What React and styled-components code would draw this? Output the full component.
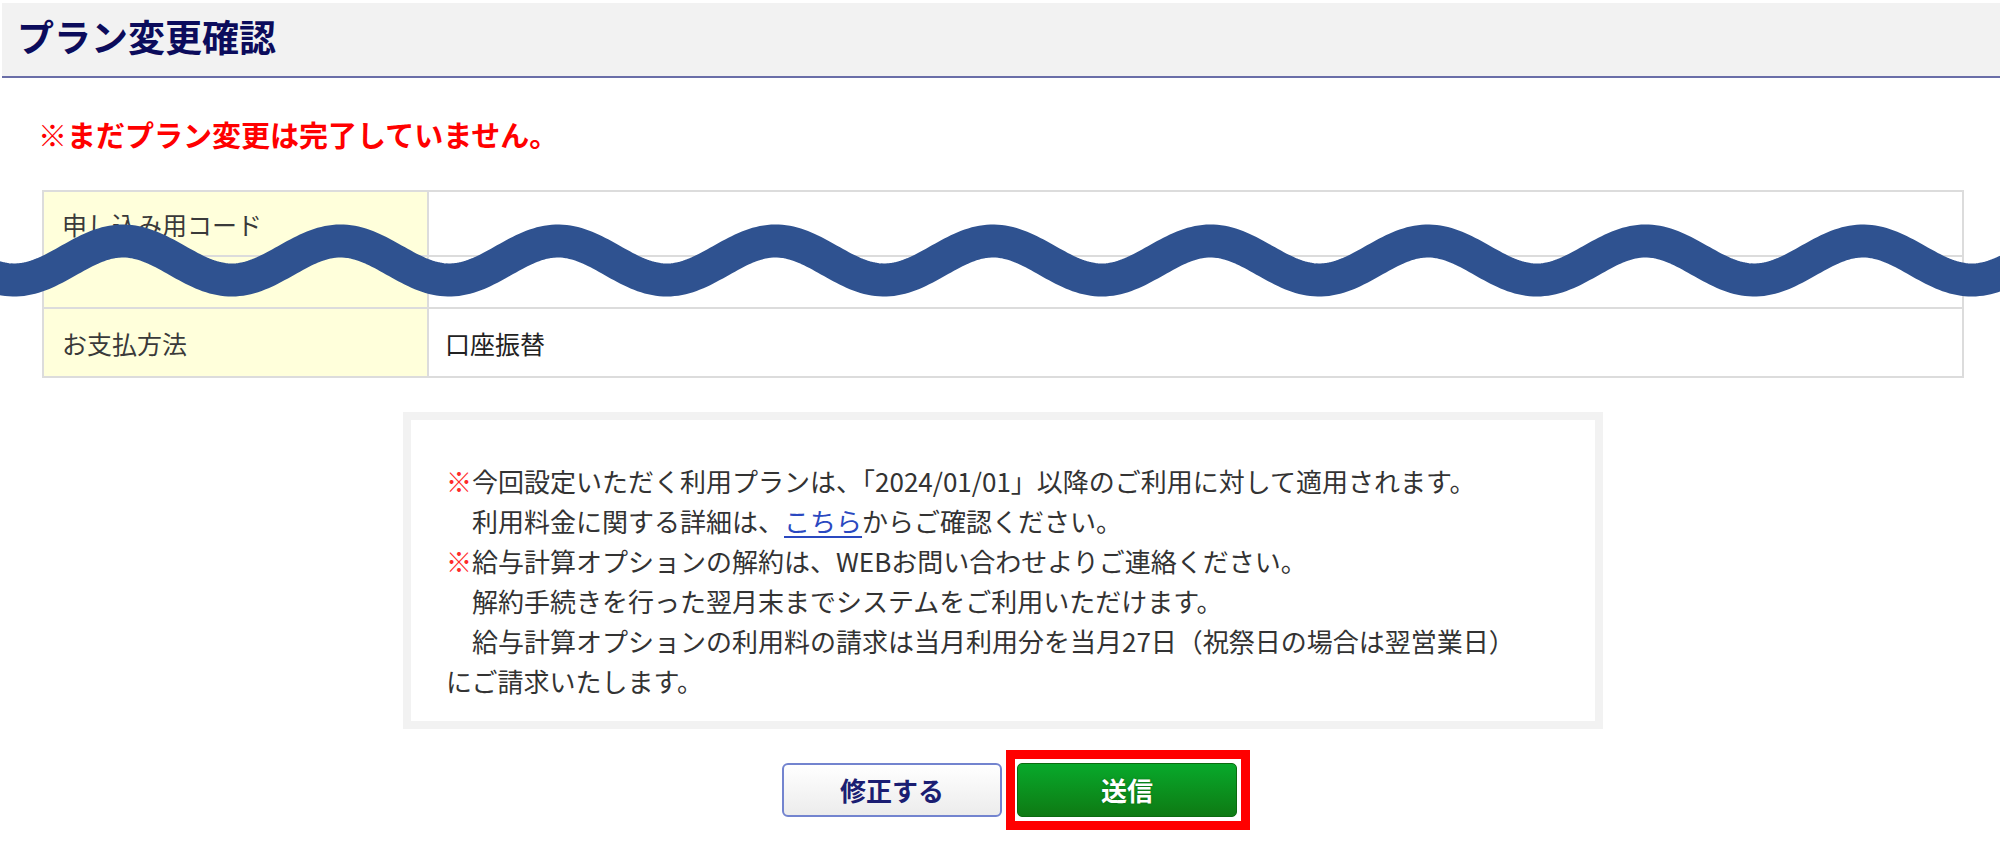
import React from "react";
import styled, { createGlobalStyle } from "styled-components";

const GlobalStyle = createGlobalStyle`
  html, body {
    margin: 0;
    padding: 0;
    background: #ffffff;
  }
  body {
    font-family: "Noto Sans CJK JP", "Noto Sans", sans-serif;
    color: #333333;
  }
`;

const Page = styled.div`
  position: relative;
  width: 2000px;
  min-height: 845px;
  overflow: hidden;
`;

const Header = styled.header`
  margin: 3px 0 0 2px;
  height: 73px;
  box-sizing: content-box;
  background: #f2f2f2;
  border-bottom: 2px solid #6a6ea8;
  display: flex;
  align-items: center;
  padding: 0 0 0 15px;
`;

const Title = styled.h1`
  margin: 0 0 6px 0;
  font-size: 37px;
  line-height: 1;
  font-weight: 700;
  color: #0c0c5c;
`;

const Warning = styled.p`
  margin: 42px 0 0 38px;
  font-size: 29px;
  line-height: 1;
  font-weight: 700;
  color: #ff0000;
`;

const InfoTable = styled.div`
  margin: 41px 36px 0 42px;
  display: grid;
  grid-template-columns: 385px 1fr;
  border-top: 2px solid #dcdcdc;
  border-left: 2px solid #dcdcdc;
`;

const Cell = styled.div`
  box-sizing: border-box;
  height: ${(p) => p.$h}px;
  display: flex;
  align-items: center;
  padding-left: ${(p) => (p.$label ? 18 : 16)}px;
  border-right: 2px solid #dcdcdc;
  border-bottom: 2px solid #dcdcdc;
  background: ${(p) => (p.$label ? "#ffffdb" : "#ffffff")};
  font-size: 25px;
  color: ${(p) => (p.$label ? "#3a3a3a" : "#222222")};
  white-space: nowrap;
`;

const NoticeBox = styled.div`
  margin: 34px 0 0 403px;
  width: 1200px;
  height: 317px;
  box-sizing: border-box;
  border: 8px solid #f2f2f2;
  padding: 41px 0 0 35px;
`;

const NoticeLine = styled.div`
  font-size: 26px;
  line-height: 40px;
  color: #333333;
  white-space: pre;
`;

const Mark = styled.span`
  color: #ff2a2a;
`;

const TextLink = styled.a`
  color: #2a48c0;
  text-decoration: underline;
  text-underline-offset: 4px;
  text-decoration-thickness: 2px;
`;

const ButtonRow = styled.div`
  margin-top: 34px;
  padding-left: 19px;
  display: flex;
  justify-content: center;
  gap: 15px;
`;

const BaseButton = styled.button`
  width: 220px;
  height: 54px;
  box-sizing: border-box;
  font-family: "Noto Sans CJK JP", "Noto Sans", sans-serif;
  font-size: 26px;
  font-weight: 700;
  line-height: 1;
  cursor: pointer;
  padding: 0;
`;

const EditButton = styled(BaseButton)`
  background: linear-gradient(#ffffff, #ececec);
  border: 2px solid #7384cf;
  border-radius: 6px;
  color: #1b1e72;
`;

const SendButton = styled(BaseButton)`
  background: linear-gradient(#08a92b, #0e7a13);
  border: 1px solid #0b6b10;
  border-radius: 5px;
  color: #ffffff;
  text-shadow: 0 0 2px rgba(0, 60, 0, 0.5);
`;

const Highlight = styled.span`
  position: relative;
  display: inline-flex;
`;

const HighlightFrame = styled.span`
  position: absolute;
  top: -13px;
  left: -11px;
  right: -13px;
  bottom: -13px;
  border: 9px solid #ff0000;
  pointer-events: none;
`;

const WaveLayer = styled.svg`
  position: absolute;
  top: 0;
  left: 0;
  pointer-events: none;
`;

function wavePath() {
  const mid = 260.5;
  const amp = 19.5;
  const period = 217.5;
  const crest = 123;
  let d = "";
  for (let x = -20; x <= 2020; x += 3) {
    const y = mid - amp * Math.cos((2 * Math.PI * (x - crest)) / period);
    d += (x === -20 ? "M" : "L") + x.toFixed(1) + " " + y.toFixed(2) + " ";
  }
  return d;
}

const IND = "\u3000";

export default function App() {
  return (
    <Page>
      <GlobalStyle />
      <Header>
        <Title>プラン変更確認</Title>
      </Header>
      <Warning>※まだプラン変更は完了していません。</Warning>
      <InfoTable>
        <Cell $label $h={65}>申し込み用コード</Cell>
        <Cell $h={65}></Cell>
        <Cell $label $h={52}></Cell>
        <Cell $h={52}></Cell>
        <Cell $label $h={69}>お支払方法</Cell>
        <Cell $h={69}>口座振替</Cell>
      </InfoTable>
      <NoticeBox>
        <NoticeLine>
          <Mark>※</Mark>
          {"今回設定いただく利用プランは、「2024/01/01」以降のご利用に対して適用されます。"}
        </NoticeLine>
        <NoticeLine>
          {IND + "利用料金に関する詳細は、"}
          <TextLink href="#">こちら</TextLink>
          {"からご確認ください。"}
        </NoticeLine>
        <NoticeLine>
          <Mark>※</Mark>
          {"給与計算オプションの解約は、WEBお問い合わせよりご連絡ください。"}
        </NoticeLine>
        <NoticeLine>{IND + "解約手続きを行った翌月末までシステムをご利用いただけます。"}</NoticeLine>
        <NoticeLine>
          {IND + "給与計算オプションの利用料の請求は当月利用分を当月27日（祝祭日の場合は翌営業日）"}
        </NoticeLine>
        <NoticeLine>{"にご請求いたします。"}</NoticeLine>
      </NoticeBox>
      <ButtonRow>
        <EditButton type="button">修正する</EditButton>
        <Highlight>
          <SendButton type="button">送信</SendButton>
          <HighlightFrame />
        </Highlight>
      </ButtonRow>
      <WaveLayer width="2000" height="845" viewBox="0 0 2000 845">
        <path d={wavePath()} fill="none" stroke="#2f5290" strokeWidth="33" />
      </WaveLayer>
    </Page>
  );
}
